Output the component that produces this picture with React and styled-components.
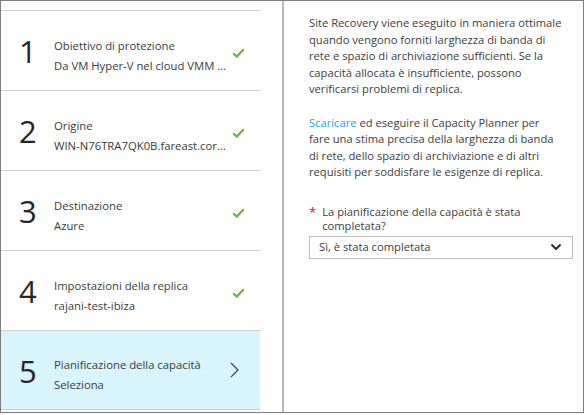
import React from 'react';
import styled, { createGlobalStyle } from 'styled-components';

const Global = createGlobalStyle`
  html, body { margin: 0; padding: 0; background: #fff; }
  body { font-family: "Open Sans", "Liberation Sans", sans-serif; color: #3c3c3c; }
`;

const Frame = styled.div`
  width: 584px;
  height: 413px;
  box-sizing: border-box;
  border: 1px solid #7d7d7d;
  display: flex;
`;

const StepList = styled.div`
  width: 283px;
  flex-shrink: 0;
  box-sizing: border-box;
  padding-top: 9px;
  border-right: 2px solid #b9b9b9;
`;

const Step = styled.div`
  width: 259px;
  height: 80px;
  box-sizing: border-box;
  border-top: 1px solid #cfcfcf;
  border-bottom: ${p => (p.$last ? '1px solid #cfcfcf' : 'none')};
  background: ${p => (p.$active ? '#d8f4fd' : '#fff')};
  display: flex;
  align-items: center;
  padding: 0 14px 0 18px;
`;

const Num = styled.div`
  width: 35px;
  flex-shrink: 0;
  font-size: 31px;
  font-weight: 400;
  color: #262626;
  line-height: 1;
  margin-top: 2px;
`;

const StepText = styled.div`
  flex: 1;
  min-width: 0;
  padding-top: 10px;
  font-size: 11.3px;
  line-height: 20px;
  color: #3a3a3a;
`;

const Line = styled.div`
  white-space: nowrap;
  overflow: hidden;
  text-overflow: ellipsis;
`;

const Mark = styled.div`
  width: 16px;
  flex-shrink: 0;
  display: flex;
  justify-content: ${p => (p.$arrow ? 'flex-start' : 'center')};
  padding-left: ${p => (p.$arrow ? '1px' : '0')};
  margin-top: ${p => (p.$arrow ? '0' : '4px')};
`;

const Detail = styled.div`
  flex: 1;
  padding: 14px 10px 0 25px;
  font-size: 11.2px;
  line-height: 16.5px;
  color: #3c3c3c;
`;

const Para = styled.p`
  margin: 0 0 17px;
  width: 254px;
`;

const Link = styled.span`
  color: #1aa1df;
`;

const Label = styled.div`
  margin-top: 24px;
  display: flex;
  gap: 6px;
  line-height: 14px;
  padding-right: 20px;
`;

const Star = styled.span`
  color: #e81123;
  font-size: 13px;
`;

const Select = styled.div`
  margin-top: 3px;
  width: 264px;
  height: 23px;
  box-sizing: border-box;
  border: 1px solid #bdbdbd;
  display: flex;
  align-items: center;
  justify-content: space-between;
  padding: 0 10px 0 9px;
`;

const Check = () => (
  <svg width="13" height="10" viewBox="0 0 13 10">
    <path d="M1.2 5.2 L4.8 8.6 L11.8 1.2" fill="none" stroke="#6bb33a" strokeWidth="2.2" />
  </svg>
);

const Arrow = () => (
  <svg width="9" height="16" viewBox="0 0 9 16">
    <path d="M1 1 L8 8 L1 15" fill="none" stroke="#444" strokeWidth="1.2" />
  </svg>
);

const Chevron = () => (
  <svg width="12" height="8" viewBox="0 0 12 8">
    <path d="M1.5 1.5 L6 6 L10.5 1.5" fill="none" stroke="#333" strokeWidth="2.2" />
  </svg>
);

const steps = [
  ['1', 'Obiettivo di protezione', 'Da VM Hyper-V nel cloud VMM con destinazione Azure'],
  ['2', 'Origine', 'WIN-N76TRA7QK0B.fareast.corp.microsoft.com'],
  ['3', 'Destinazione', 'Azure'],
  ['4', 'Impostazioni della replica', 'rajani-test-ibiza'],
  ['5', 'Pianificazione della capacità', 'Seleziona', true],
];

export default function App() {
  return (
    <>
      <Global />
      <Frame>
        <StepList>
          {steps.map(([n, title, sub, active], i) => (
            <Step key={n} $active={active} $last={i === steps.length - 1}>
              <Num>{n}</Num>
              <StepText>
                <Line>{title}</Line>
                <Line>{sub}</Line>
              </StepText>
              <Mark $arrow={active}>{active ? <Arrow /> : <Check />}</Mark>
            </Step>
          ))}
        </StepList>
        <Detail>
          <Para>
            Site Recovery viene eseguito in maniera ottimale quando vengono forniti larghezza di banda di rete e
            spazio di archiviazione sufficienti. Se la capacità allocata è insufficiente, possono verificarsi
            problemi di replica.
          </Para>
          <Para>
            <Link>Scaricare</Link> ed eseguire il Capacity Planner per fare una stima precisa della larghezza di
            banda di rete, dello spazio di archiviazione e di altri requisiti per soddisfare le esigenze di replica.
          </Para>
          <Label>
            <Star>*</Star>
            <span>La pianificazione della capacità è stata completata?</span>
          </Label>
          <Select>
            <span>Sì, è stata completata</span>
            <Chevron />
          </Select>
        </Detail>
      </Frame>
    </>
  );
}
